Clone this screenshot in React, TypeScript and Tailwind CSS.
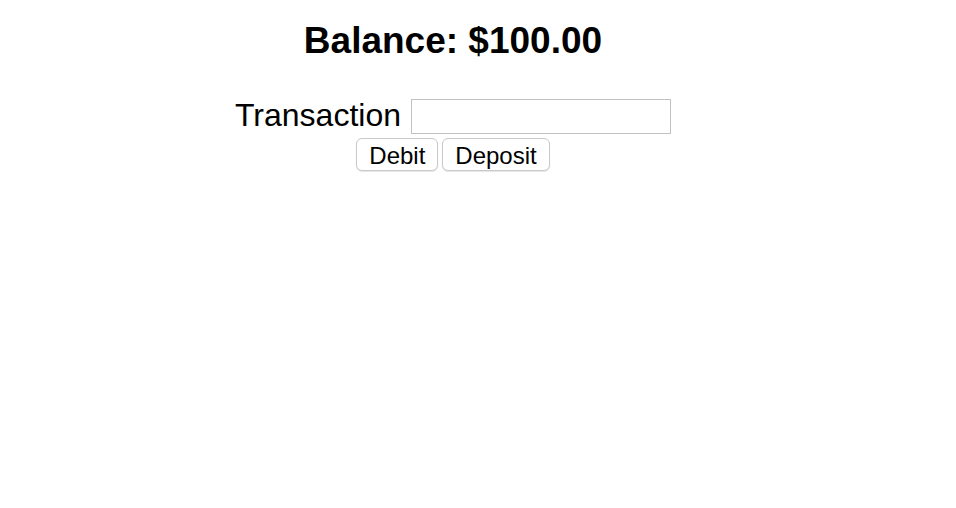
import React from "react";

export default function App() {
  return (
    <div className="w-[956px] h-[508px] bg-white" style={{ fontFamily: '"Liberation Sans", Arial, Helvetica, sans-serif' }}>
      <div className="w-[906px] flex flex-col items-center text-black">
        <h1 className="mt-[21px] text-[37px] leading-[40px] font-bold">Balance: $100.00</h1>
        <div className="mt-[38px] flex items-start">
          <span className="text-[32px] leading-[32px]">Transaction</span>
          <input
            type="text"
            className="ml-[10px] w-[260px] h-[35px] border border-[#c2c2c2] bg-white outline-none"
          />
        </div>
        <div className="mt-[4px] flex gap-[4px]">
          <button className="h-[33px] px-[12px] pt-[2px] text-[24px] leading-[29px] bg-white border border-[#c9c9c9] rounded-[6px] shadow-[0_1px_1px_rgba(0,0,0,0.1)]">
            Debit
          </button>
          <button className="h-[33px] px-[12px] pt-[2px] text-[24px] leading-[29px] bg-white border border-[#c9c9c9] rounded-[6px] shadow-[0_1px_1px_rgba(0,0,0,0.1)]">
            Deposit
          </button>
        </div>
      </div>
    </div>
  );
}
